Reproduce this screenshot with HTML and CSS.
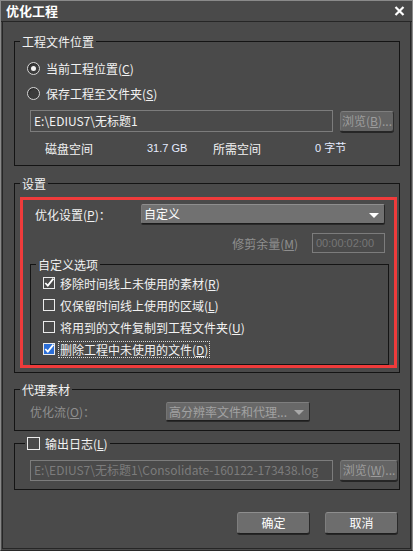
FILE: index.html
```html
<!DOCTYPE html>
<html lang="zh">
<head>
<meta charset="utf-8">
<title>优化工程</title>
<link rel="stylesheet" href="styles.css">
</head>
<body>
<div class="window">
  <div class="titlebar">
    <span class="title">优化工程</span>
    <svg class="close" width="11" height="10" viewBox="0 0 11 10"><path d="M1.5 1 L9.5 9 M9.5 1 L1.5 9" stroke="#fff" stroke-width="2.2" fill="none"/></svg>
  </div>
  <div class="client">
    <fieldset class="group">
      <legend>工程文件位置</legend>
      <div class="g1-body">
        <div class="radio-row"><span class="radio on"></span><span>当前工程位置(<u>C</u>)</span></div>
        <div class="radio-row"><span class="radio"></span><span>保存工程至文件夹(<u>S</u>)</span></div>
        <div class="path-row">
          <div class="textbox">E:\EDIUS7\无标题1</div>
          <div class="btn browse disabled">浏览(<u>B</u>)...</div>
        </div>
        <div class="disk-row">
          <span>磁盘空间</span><span class="num">31.7 GB</span><span>所需空间</span><span class="num">0 字节</span>
        </div>
      </div>
    </fieldset>

    <fieldset class="group g2">
      <legend>设置</legend>
      <div class="g2-body">
        <div class="opt-row">
          <span class="opt-label">优化设置(<u>P</u>)：</span>
          <div class="combo"><span class="combo-text">自定义</span><span class="arrow"></span></div>
        </div>
        <div class="trim-row">
          <span class="dim">修剪余量(<u>M</u>)</span>
          <div class="timebox">00:00:02:00</div>
        </div>
        <fieldset class="group sub">
          <legend>自定义选项</legend>
          <div class="sub-body">
            <div class="check-row"><span class="check"><svg width="12" height="12" viewBox="0 0 12 12"><path d="M2.3 6 L4.8 8.6 L10.4 1.6" stroke="#fff" stroke-width="1.8" fill="none"/></svg></span><span>移除时间线上未使用的素材(<u>R</u>)</span></div>
            <div class="check-row"><span class="check"></span><span>仅保留时间线上使用的区域(<u>L</u>)</span></div>
            <div class="check-row"><span class="check"></span><span>将用到的文件复制到工程文件夹(<u>U</u>)</span></div>
            <div class="check-row"><span class="check blue"><svg width="12" height="12" viewBox="0 0 12 12"><path d="M2.3 6 L4.8 8.6 L10.4 1.6" stroke="#fff" stroke-width="1.8" fill="none"/></svg></span><span class="focus">删除工程中未使用的文件(<u>D</u>)</span></div>
          </div>
        </fieldset>
      </div>
    </fieldset>

    <fieldset class="group g3">
      <legend>代理素材</legend>
      <div class="g3-body">
        <span class="dim flow-label">优化流(<u>O</u>)：</span>
        <div class="combo disabled-combo"><span class="combo-text">高分辨率文件和代理...</span><span class="arrow gray"></span></div>
      </div>
    </fieldset>

    <fieldset class="group g4">
      <legend class="check-legend"><span class="check"></span><span>输出日志(<u>L</u>)</span></legend>
      <div class="g4-body">
        <div class="textbox dimtext">E:\EDIUS7\无标题1\Consolidate-160122-173438.log</div>
        <div class="btn browse wide disabled">浏览(<u>W</u>)...</div>
      </div>
    </fieldset>

    <div class="actions">
      <div class="btn action">确定</div>
      <div class="btn action">取消</div>
    </div>
  </div>
  <div class="highlight"></div>
</div>
</body>
</html>
```

FILE: styles.css
```css
html, body {
  margin: 0;
  padding: 0;
  background: #4a4a4a;
}
body {
  font-family: "Noto Sans CJK SC", "Liberation Sans", sans-serif;
  font-size: 12px;
  color: #f2f2f2;
}
u {
  text-decoration: underline;
  text-underline-offset: 1px;
}
.window {
  position: relative;
  width: 413px;
  height: 551px;
  box-sizing: border-box;
  border: 1px solid #8a8a8a;
  border-bottom-color: #2a2a2a;
  background: #4a4a4a;
  display: flex;
  flex-direction: column;
}
.titlebar {
  height: 20px;
  border-bottom: 1px solid #262626;
  display: flex;
  align-items: center;
  justify-content: space-between;
  padding: 0 7px 0 5px;
  flex: none;
}
.title {
  font-size: 13px;
  font-weight: bold;
  color: #fff;
  line-height: 20px;
}
.close {
  display: block;
}
.client {
  flex: 1;
  margin: 0 1px 1px 1px;
  border: 1px solid #262626;
  border-top: 0;
  padding: 12px 10px 0 11px;
}
.group {
  margin: 0;
  padding: 0;
  border: 1px solid #141414;
  min-width: 0;
}
.group > legend {
  margin-left: 5px;
  padding: 0 2px;
  height: 15px;
  line-height: 15px;
  font-size: 12px;
  color: #f2f2f2;
}
.g1-body {
  padding: 7px 0 6px 12px;
}
.radio-row {
  height: 25px;
  display: flex;
  align-items: center;
  gap: 6px;
  line-height: 15px;
}
.radio {
  width: 13px;
  height: 13px;
  box-sizing: border-box;
  border-radius: 50%;
  border: 1px solid #d6d6d6;
  background: #3c3c3c;
  box-shadow: inset 1px 1px 1px #2a2a2a;
  position: relative;
  flex: none;
}
.radio.on::after {
  content: "";
  position: absolute;
  left: 3px;
  top: 3px;
  width: 5px;
  height: 5px;
  border-radius: 50%;
  background: #f4f4f4;
}
.path-row {
  margin-top: 4px;
  margin-left: 3px;
  display: flex;
  align-items: flex-start;
}
.textbox {
  width: 303px;
  height: 22px;
  box-sizing: border-box;
  border: 1px solid #7c7c7c;
  padding-left: 3px;
  line-height: 19px;
  white-space: nowrap;
  overflow: hidden;
  flex: none;
}
.dimtext {
  color: #7c7c7c;
  height: 21px;
  line-height: 18px;
}
.btn {
  box-sizing: border-box;
  border: 1px solid;
  border-color: #8e8e8e #2a2a2a #1e1e1e #7e7e7e;
  border-radius: 3px;
  background: #6d6d6d;
  box-shadow: 0 1px 0 #262626;
  text-align: center;
  color: #fff;
  flex: none;
  white-space: nowrap;
}
.btn.disabled {
  color: #9c9c9c;
  background: #646464;
  border-color: #7e7e7e #2e2e2e #262626 #727272;
}
.browse {
  margin-left: 7px;
  margin-top: 1px;
  width: 54px;
  height: 21px;
  line-height: 18px;
  font-size: 12px;
}
.browse.wide {
  width: 58px;
  margin-top: 0;
}
.disk-row {
  margin-top: 5px;
  height: 22px;
  padding-left: 18px;
  display: grid;
  grid-template-columns: 102px 66px 102px auto;
  align-items: center;
  line-height: 15px;
}
.num {
  font-family: "Liberation Sans", "Noto Sans CJK SC", sans-serif;
  font-size: 11px;
  color: #e6ecff;
}
.g2 {
  margin-top: 10px;
}
.g2-body {
  padding: 13px 10px 7px 15px;
}
.opt-row {
  height: 20px;
  display: flex;
  align-items: center;
}
.opt-label {
  width: 106px;
  padding-left: 5px;
  flex: none;
}
.combo {
  flex: 1;
  height: 20px;
  box-sizing: border-box;
  margin-right: 4px;
  border: 1px solid;
  border-color: #8e8e8e #262626 #1c1c1c #7a7a7a;
  border-radius: 2px;
  background: #717171;
  box-shadow: 0 1px 0 #2a2a2a;
  display: flex;
  align-items: center;
  justify-content: space-between;
  padding: 0 5px 0 2px;
  color: #fff;
  font-size: 12px;
  line-height: 16px;
  white-space: nowrap;
  overflow: hidden;
}
.combo-text {
  overflow: hidden;
  white-space: nowrap;
}
.arrow {
  flex: none;
  width: 0;
  height: 0;
  border-left: 5px solid transparent;
  border-right: 5px solid transparent;
  border-top: 5px solid #fff;
  margin-top: 2px;
}
.arrow.gray {
  border-top-color: #a8a8a8;
}
.trim-row {
  margin-top: 9px;
  height: 20px;
  display: flex;
  align-items: center;
  justify-content: flex-end;
}
.dim {
  color: #8f8f8f;
  font-size: 12px;
}
.timebox {
  width: 73px;
  height: 20px;
  box-sizing: border-box;
  margin-left: 14px;
  margin-right: 4px;
  border: 1px solid #7c7c7c;
  color: #767676;
  font-family: "Liberation Sans", sans-serif;
  font-size: 11px;
  line-height: 18px;
  padding-left: 3px;
}
.sub {
  margin-top: 4px;
}
.sub-body {
  padding: 0 0 4px 12px;
}
.check-row {
  height: 22px;
  display: flex;
  align-items: center;
  gap: 5px;
  font-size: 12px;
  line-height: 15px;
}
.check {
  width: 12px;
  height: 12px;
  box-sizing: border-box;
  border: 1px solid #ececec;
  position: relative;
  flex: none;
  display: inline-block;
}
.check svg {
  position: absolute;
  left: -1px;
  top: -1px;
}
.check.blue {
  background: #2c6fd8;
}
.focus {
  outline: 1px dotted #d8d8d8;
  outline-offset: 0;
  padding: 0 1px;
  margin-left: -1px;
}
.g3 {
  margin-top: 9px;
}
.g3-body {
  padding: 5px 0 9px 15px;
  display: flex;
  align-items: center;
  height: 19px;
}
.flow-label {
  width: 136px;
  flex: none;
}
.disabled-combo {
  flex: none;
  width: 144px;
  height: 19px;
  background: #686868;
  color: #a2a2a2;
  border-color: #7e7e7e #2a2a2a #1e1e1e #747474;
}
.g4 {
  margin-top: 5px;
}
.g4 > legend.check-legend {
  margin-left: 10px;
  padding: 0 2px;
  display: flex;
  align-items: center;
  gap: 5px;
  font-size: 12px;
}
.check-legend .check {
  width: 13px;
  height: 13px;
}
.g4-body {
  padding: 9px 0 8px 15px;
  display: flex;
  align-items: flex-start;
}
.actions {
  margin-top: 22px;
  margin-right: 2px;
  display: flex;
  justify-content: flex-end;
  gap: 15px;
}
.action {
  width: 73px;
  height: 22px;
  line-height: 19px;
  font-size: 12px;
}
.highlight {
  position: absolute;
  left: 19px;
  top: 196px;
  width: 377px;
  height: 171px;
  box-sizing: border-box;
  border: 3px solid #ef3b3b;
  pointer-events: none;
}
```
